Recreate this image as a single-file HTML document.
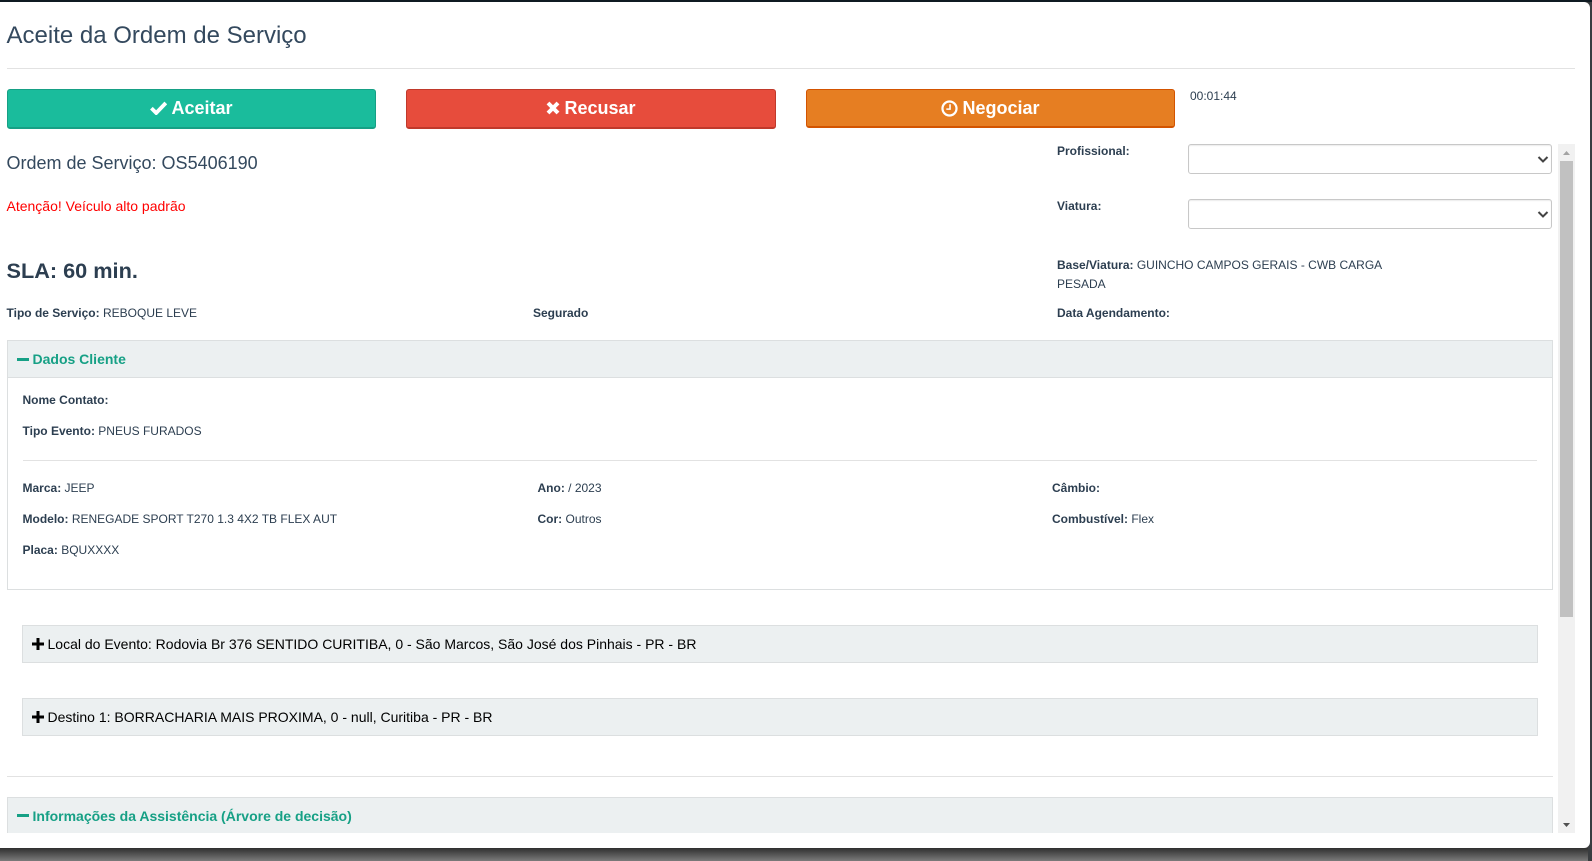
<!DOCTYPE html>
<html lang="pt-BR">
<head>
<meta charset="utf-8">
<title>Aceite da Ordem de Serviço</title>
<style>
html,body{margin:0;padding:0;width:1592px;height:861px;overflow:hidden;background:#4a4a4a;}
body{position:relative;font-family:"Liberation Sans",Arial,sans-serif;color:#2c3e50;}
.a{position:absolute;white-space:nowrap;}
#bgb{position:absolute;left:0;top:848px;width:1592px;height:13px;background:linear-gradient(#2f2f2f,#7a7a7a);}
#bgr{position:absolute;left:1588px;top:0;width:4px;height:861px;background:#3a3d40;}
#top{position:absolute;left:0;top:0;width:1592px;height:2px;background:#0f1a22;}
#modal{position:absolute;left:0;top:2px;width:1590px;height:846px;background:#fff;border-radius:0 6px 6px 0;}
.t{font-size:12px;line-height:16px;color:#2c3e50;}
.t b{font-weight:700;}
.hr{position:absolute;height:1px;background:#e2e2e2;}
.btn{position:absolute;top:89px;width:367px;border:1px solid;border-bottom-width:2px;border-radius:3px;box-sizing:content-box;height:37px;color:#fff;font-size:18px;font-weight:700;display:flex;align-items:center;justify-content:center;line-height:36px;}
.btn span{position:relative;top:-1px;display:flex;align-items:center;}
.btn svg{margin-right:4px;}
.sel{position:absolute;left:1188px;width:362px;height:28px;border:1px solid #c8c8c8;border-radius:3px;background:#fff;box-shadow:inset 0 1px 1px rgba(0,0,0,.08);}
.sel svg{position:absolute;right:2px;top:10px;}
.ph{position:absolute;background:#ecf0f1;border:1px solid #dcdfe0;box-sizing:border-box;}
.g{color:#16a085;font-size:14px;font-weight:700;line-height:18px;}
.k{color:#000;font-size:14px;line-height:18px;}
</style>
</head>
<body>
<div id="bgb"></div>
<div id="bgr"></div>
<div id="top"></div>
<div id="modal"></div>

<div class="a" style="left:6.5px;top:22px;font-size:24px;line-height:28px;color:#34495e;">Aceite da Ordem de Serviço</div>
<div class="hr" style="left:7px;top:68px;width:1568px;"></div>

<div class="btn" style="left:7px;background:#1abc9c;border-color:#16a085;"><span>
<svg width="17" height="14" viewBox="0 0 17 14"><path d="M1.4 7.2 6.2 12 15.8 2" fill="none" stroke="#fff" stroke-width="3.8"/></svg>Aceitar</span></div>
<div class="btn" style="left:406px;width:368px;background:#e74c3c;border-color:#c0392b;"><span>
<svg width="14" height="14" viewBox="0 0 14 14"><path d="M2 2 12 12M12 2 2 12" fill="none" stroke="#fff" stroke-width="4"/></svg>Recusar</span></div>
<div class="btn" style="left:806px;background:#e67e22;border-color:#d35400;height:36px;"><span style="top:0">
<svg width="17" height="17" viewBox="0 0 16 16"><circle cx="8" cy="8" r="6.6" fill="none" stroke="#fff" stroke-width="2.1"/><path d="M8.5 4v4.6H5" fill="none" stroke="#fff" stroke-width="1.5"/></svg>Negociar</span></div>

<div class="a t" style="left:1190px;top:88px;">00:01:44</div>

<div class="a" style="left:6.5px;top:153px;font-size:18px;line-height:20px;color:#34495e;">Ordem de Serviço: OS5406190</div>
<div class="a" style="left:6.5px;top:198px;font-size:14px;line-height:16px;color:#f00;">Atenção! Veículo alto padrão</div>
<div class="a" style="left:6.5px;top:258px;font-size:21.7px;line-height:26px;font-weight:700;color:#2c3e50;">SLA: 60 min.</div>

<div class="a t" style="left:6.5px;top:305px;"><b>Tipo de Serviço:</b> REBOQUE LEVE</div>
<div class="a t" style="left:533px;top:305px;"><b>Segurado</b></div>
<div class="a t" style="left:1057px;top:305px;"><b>Data Agendamento:</b></div>

<div class="a t" style="left:1057px;top:143px;"><b>Profissional:</b></div>
<div class="sel" style="top:144px;"><svg width="12" height="9" viewBox="0 0 12 9"><path d="M1.5 2 6 6.5 10.5 2" fill="none" stroke="#444" stroke-width="2"/></svg></div>
<div class="a t" style="left:1057px;top:198px;"><b>Viatura:</b></div>
<div class="sel" style="top:199px;"><svg width="12" height="9" viewBox="0 0 12 9"><path d="M1.5 2 6 6.5 10.5 2" fill="none" stroke="#444" stroke-width="2"/></svg></div>

<div class="a t" style="left:1057px;top:257px;"><b>Base/Viatura:</b> GUINCHO CAMPOS GERAIS - CWB CARGA</div>
<div class="a t" style="left:1057px;top:276px;">PESADA</div>

<!-- Dados Cliente -->
<div class="a" style="left:7px;top:340px;width:1546px;height:250px;border:1px solid #dcdfe0;box-sizing:border-box;white-space:normal;"></div>
<div class="ph" style="left:7px;top:340px;width:1546px;height:38px;"></div>
<div class="a" style="left:17px;top:358px;width:12px;height:3px;background:#16a085;"></div>
<div class="a g" style="left:32.5px;top:350px;">Dados Cliente</div>

<div class="a t" style="left:22.5px;top:392px;"><b>Nome Contato:</b></div>
<div class="a t" style="left:22.5px;top:423px;"><b>Tipo Evento:</b> PNEUS FURADOS</div>
<div class="hr" style="left:23px;top:460px;width:1514px;"></div>

<div class="a t" style="left:22.5px;top:480px;"><b>Marca:</b> JEEP</div>
<div class="a t" style="left:22.5px;top:511px;"><b>Modelo:</b> RENEGADE SPORT T270 1.3 4X2 TB FLEX AUT</div>
<div class="a t" style="left:22.5px;top:542px;"><b>Placa:</b> BQUXXXX</div>
<div class="a t" style="left:537.5px;top:480px;"><b>Ano:</b> / 2023</div>
<div class="a t" style="left:537.5px;top:511px;"><b>Cor:</b> Outros</div>
<div class="a t" style="left:1052px;top:480px;"><b>Câmbio:</b></div>
<div class="a t" style="left:1052px;top:511px;"><b>Combustível:</b> Flex</div>

<!-- Local -->
<div class="ph" style="left:22px;top:625px;width:1516px;height:38px;"></div>
<svg class="a" style="left:32px;top:638px;" width="12" height="12" viewBox="0 0 12 12"><path d="M4.5 0h3v4.5H12v3H7.5V12h-3V7.5H0v-3h4.5z" fill="#000"/></svg>
<div class="a k" style="left:47.5px;top:635px;">Local do Evento: Rodovia Br 376 SENTIDO CURITIBA, 0 - São Marcos, São José dos Pinhais - PR - BR</div>

<!-- Destino -->
<div class="ph" style="left:22px;top:698px;width:1516px;height:38px;"></div>
<svg class="a" style="left:32px;top:711px;" width="12" height="12" viewBox="0 0 12 12"><path d="M4.5 0h3v4.5H12v3H7.5V12h-3V7.5H0v-3h4.5z" fill="#000"/></svg>
<div class="a k" style="left:47.5px;top:708px;">Destino 1: BORRACHARIA MAIS PROXIMA, 0 - null, Curitiba - PR - BR</div>

<div class="hr" style="left:7px;top:776px;width:1546px;"></div>

<!-- Informações -->
<div class="a" style="left:7px;top:797px;width:1546px;height:36px;background:#ecf0f1;border:1px solid #dcdfe0;border-bottom:0;box-sizing:border-box;"></div>
<div class="a" style="left:17px;top:814px;width:12px;height:3px;background:#16a085;"></div>
<div class="a g" style="left:32.5px;top:807px;">Informações da Assistência (Árvore de decisão)</div>

<!-- Scrollbar -->
<div class="a" style="left:1558px;top:144px;width:17px;height:689px;background:#f1f1f1;"></div>
<div class="a" style="left:1560px;top:161px;width:13px;height:456px;background:#c1c1c1;"></div>
<svg class="a" style="left:1558px;top:144px;" width="17" height="17" viewBox="0 0 17 17"><path d="M5 11 8.5 7 12 11z" fill="#a3a3a3"/></svg>
<svg class="a" style="left:1558px;top:816px;" width="17" height="17" viewBox="0 0 17 17"><path d="M5 7 8.5 11 12 7z" fill="#505050"/></svg>
</body>
</html>
